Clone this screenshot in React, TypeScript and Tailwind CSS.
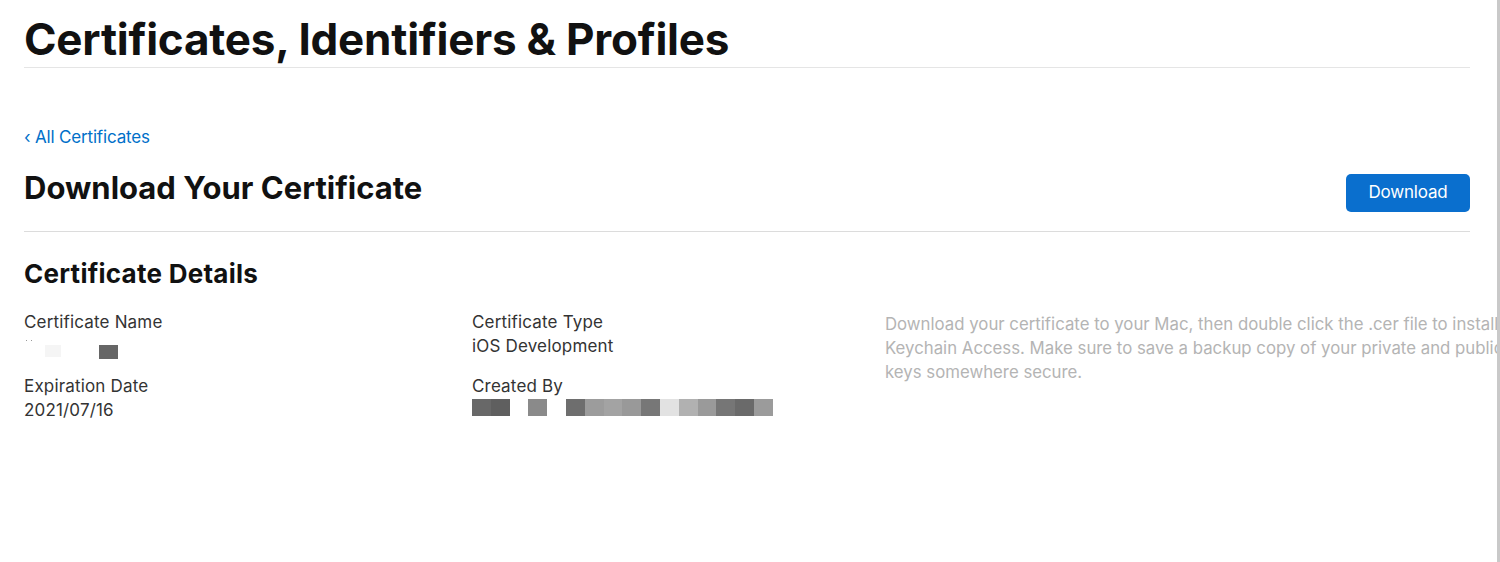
const createdByBlocks = [
  "#686868",
  "#5f5f5f",
  "#ffffff",
  "#8a8a8a",
  "#ffffff",
  "#6e6e6e",
  "#9c9c9c",
  "#a3a3a3",
  "#999999",
  "#777777",
  "#e2e2e2",
  "#b1b1b1",
  "#9a9a9a",
  "#767676",
  "#6a6a6a",
  "#9b9b9b",
];

function Redacted({ colors }: { colors: string[] }) {
  return (
    <div className="flex h-[17px] items-stretch">
      {colors.map((c, i) => (
        <div key={i} className="w-[18.8px]" style={{ backgroundColor: c }} />
      ))}
    </div>
  );
}

export default function App() {
  return (
    <div className="flex h-[562px] w-[1500px] overflow-hidden bg-white font-['Inter',sans-serif] text-[#1d1d1f]">
      <div className="min-w-0 flex-1 overflow-hidden">
        <div className="w-[1470px] pl-6">
          {/* Header */}
          <h1 className="pt-[13px] pb-[2px] text-[44px] font-bold leading-[52px] tracking-[-0.005em] text-[#111]">
            Certificates, Identifiers &amp; Profiles
          </h1>
          <div className="h-px bg-[#e5e5e5]" />

          {/* Back link */}
          <a className="mt-[57px] block text-[17px] leading-6 tracking-[-0.01em] text-[#0070c9]">
            ‹ All Certificates
          </a>

          {/* Title + action */}
          <div className="mt-[19px] flex items-start justify-between pb-[19px]">
            <h2 className="mt-[2px] text-[31px] font-bold leading-9 text-[#111]">
              Download Your Certificate
            </h2>
            <button className="mt-[6px] h-[38px] w-[124px] rounded-[5px] bg-[#0a6fce] text-[17px] tracking-[-0.01em] text-white">
              Download
            </button>
          </div>
          <div className="h-px bg-[#dcdcdc]" />

          {/* Details */}
          <h3 className="mt-[26px] text-[26px] font-bold leading-8 tracking-[0.01em] text-[#111]">
            Certificate Details
          </h3>
          <div className="mt-[20px] grid grid-cols-[448px_413px_700px] text-[17px] leading-6 tracking-[0.01em] text-[#333]">
            <div>
              <div>Certificate Name</div>
              <div className="relative h-6">
                <div className="absolute left-[2px] top-[6px] h-px w-px bg-[#999]" />
                <div className="absolute left-[7px] top-[6px] h-px w-px bg-[#999]" />
                <div className="absolute left-[21px] top-[11px] h-[12px] w-[16px] bg-[#f5f5f5]" />
                <div className="absolute left-[75px] top-[11px] h-[14px] w-[19px] bg-[#666]" />
              </div>
              <div className="mt-4">Expiration Date</div>
              <div>2021/07/16</div>
            </div>
            <div>
              <div>Certificate Type</div>
              <div>iOS Development</div>
              <div className="mt-4">Created By</div>
              <div className="pt-px">
                <Redacted colors={createdByBlocks} />
              </div>
            </div>
            <p className="whitespace-nowrap pt-[2px] text-[16.8px] leading-6 tracking-normal text-[#b4b4b4]">
              Download your certificate to your Mac, then double click the .cer file to install in
              <br />
              Keychain Access. Make sure to save a backup copy of your private and public
              <br />
              keys somewhere secure.
            </p>
          </div>
        </div>
      </div>
      {/* Scrollbar edge */}
      <div className="w-[3px] shrink-0 bg-[#c9c9c9]" />
    </div>
  );
}
